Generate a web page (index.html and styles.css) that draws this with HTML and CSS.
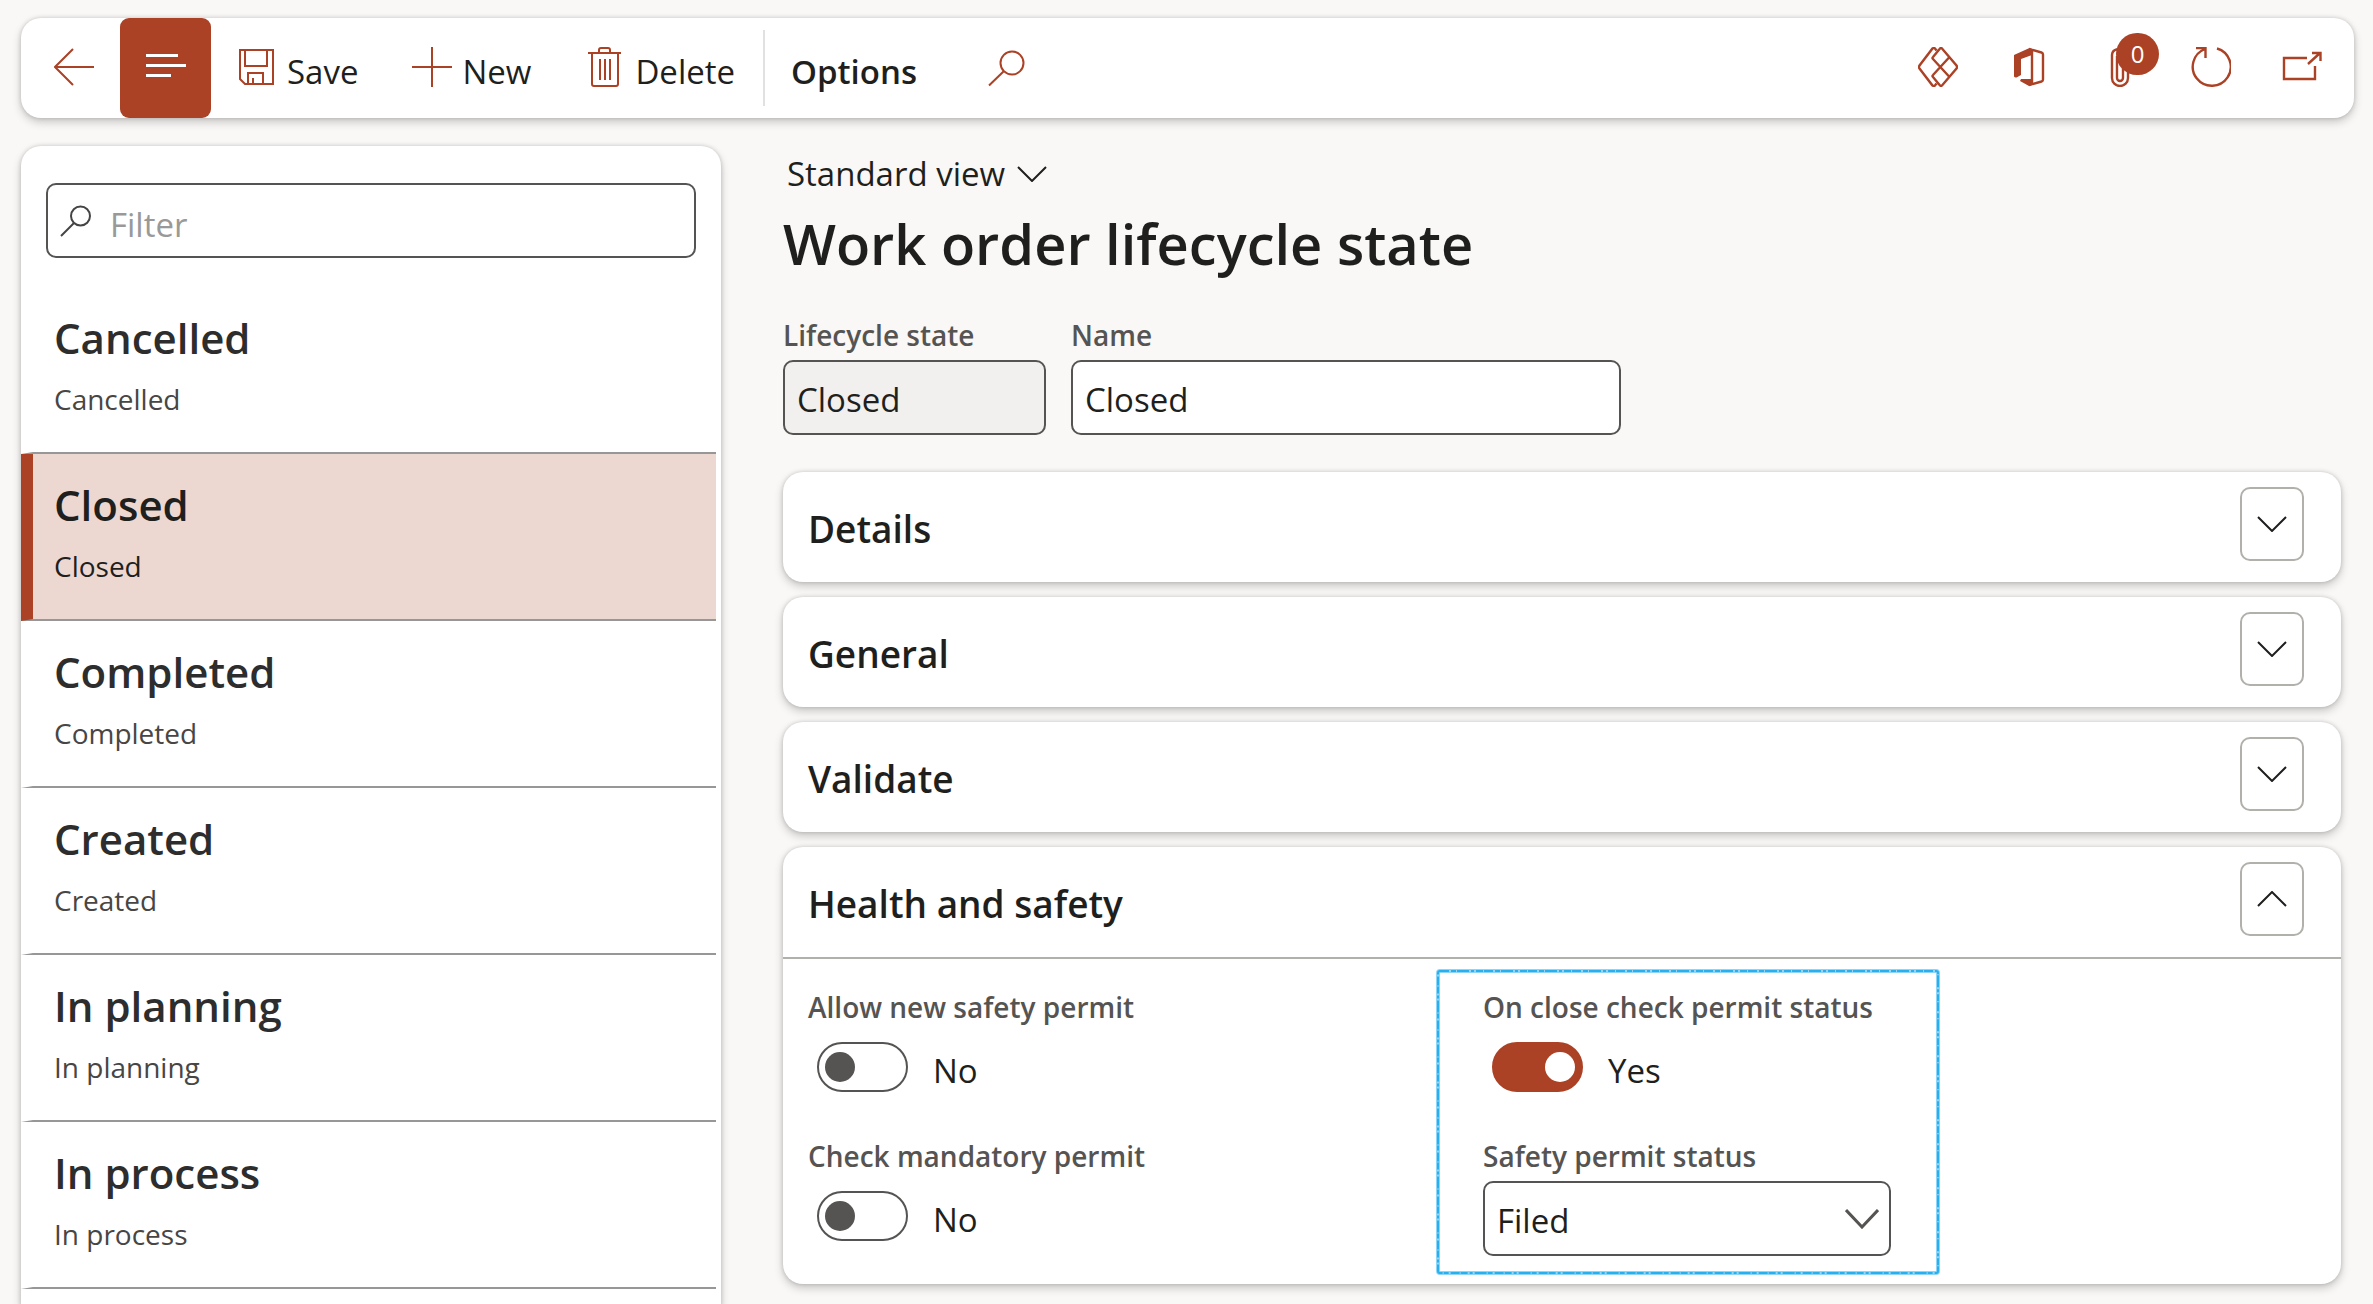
FILE: index.html
```
<!DOCTYPE html>
<html lang="en">
<head>
<meta charset="utf-8">
<meta name="viewport" content="width=device-width, initial-scale=1">
<title>Work order lifecycle state</title>
<link rel="stylesheet" href="styles.css">
</head>
<body>
<div class="app">
  <header class="toolbar">
    <button class="tool tool-back" type="button" aria-label="Back">
      <svg class="icon" viewBox="0 0 40 40"><path d="M40 20H1M19 2 1 20l18 18"/></svg>
    </button>
    <button class="tool tool-menu" type="button" aria-label="Show list">
      <svg class="icon icon-menu" viewBox="0 0 40 40"><path d="M0 8.5h32M0 18.5h40M0 28.5h25"/></svg>
    </button>
    <button class="tool tool-action" type="button">
      <svg class="icon" viewBox="0 0 40 40"><path d="M3 3h33v34H8l-5-5zM8 3v16h22V3M11 37V26h15v11M16 31v6"/></svg>
      <span class="tool-text">Save</span>
    </button>
    <button class="tool tool-action" type="button">
      <svg class="icon" viewBox="0 0 40 40"><path d="M0 20h40M20 0v40"/></svg>
      <span class="tool-text">New</span>
    </button>
    <button class="tool tool-action" type="button">
      <svg class="icon" viewBox="0 0 40 40"><path d="M3 6h33M7 6v31q0 2 2 2h22q2 0 2-2V6M14 6V3q0-2 2-2h7q2 0 2 2v3M15 12v21M20 12v21M25 12v21"/></svg>
      <span class="tool-text">Delete</span>
    </button>
    <span class="divider"></span>
    <button class="tool tool-strong" type="button"><span class="tool-text">Options</span></button>
    <button class="tool tool-search" type="button" aria-label="Search">
      <svg class="icon" viewBox="0 0 40 40"><circle cx="25" cy="16" r="11.5"/><path d="M17 24 2 38.500"/></svg>
    </button>
    <div class="tool-end">
      <button class="tool tool-icon" type="button" aria-label="Power Apps">
        <svg class="icon" viewBox="0 0 40 40"><path d="M18.500 3.500 17 1.500q-1-1-2.500 0L1.500 18.500q-1 1.500 0 3l13 17q1.500 1 2.500 0l1.500-2M15 10l7-8.500q1-1 2 0l14.500 17q1 1.500 0 3L24 38.500q-1 1-2 0L15 30q-1-1 0-2l16.500-18M15 10q-1 1 0 2l16.500 18"/></svg>
      </button>
      <button class="tool tool-icon" type="button" aria-label="Open in Microsoft Office">
        <svg class="icon" viewBox="0 0 40 40"><path class="solid" d="M20.500 1 5 8v21.500q1 1.500 3 .8l4-2.300V12l11-4V2zM12 32h11v6l-3 1-9-5z"/><path d="m20 2 12.500 3.500q1.500.5 1.500 2v25q0 1.500-1.500 2L20 38M23 3v34"/></svg>
      </button>
      <button class="tool tool-icon" type="button" aria-label="Attachments">
        <svg class="icon" viewBox="0 0 40 40"><path d="M28 8v23a8 8 0 0 1-16 0V8a6 6 0 0 1 11-3v26a3 3 0 0 1-6 0V9"/></svg>
        <span class="badge">0</span>
      </button>
      <button class="tool tool-icon" type="button" aria-label="Refresh">
        <svg class="icon" viewBox="0 0 40 40"><path d="M26 1.500A19 19 0 1 1 14 2M5 1h9.500v10"/></svg>
      </button>
      <button class="tool tool-icon" type="button" aria-label="Open in new window">
        <svg class="icon" viewBox="0 0 40 40"><path d="M25 11H2v21h31V19M26 17 38 6M30 6h8.500v8"/></svg>
      </button>
    </div>
  </header>

  <div class="workspace">
    <aside class="sidebar">
      <div class="filter">
        <svg class="filter-icon" viewBox="0 0 32 32"><circle cx="20.500" cy="11" r="9.500"/><path d="M14 18 1 31"/></svg>
        <input class="filter-input" type="text" placeholder="Filter" aria-label="Filter">
      </div>
      <ul class="states">
        <li><button class="state" type="button"><span class="state-title">Cancelled</span><span class="state-sub">Cancelled</span></button></li>
        <li><button class="state state-selected" type="button"><span class="state-title">Closed</span><span class="state-sub">Closed</span></button></li>
        <li><button class="state" type="button"><span class="state-title">Completed</span><span class="state-sub">Completed</span></button></li>
        <li><button class="state" type="button"><span class="state-title">Created</span><span class="state-sub">Created</span></button></li>
        <li><button class="state" type="button"><span class="state-title">In planning</span><span class="state-sub">In planning</span></button></li>
        <li><button class="state" type="button"><span class="state-title">In process</span><span class="state-sub">In process</span></button></li>
      </ul>
    </aside>

    <main class="content">
      <button class="view" type="button">Standard view
        <svg class="chevron" viewBox="0 0 30 16"><path d="m1 1 14 14L29 1"/></svg>
      </button>
      <h1 class="title">Work order lifecycle state</h1>

      <div class="header-fields">
        <div class="field field-state">
          <label class="label" for="state">Lifecycle state</label>
          <input class="input input-readonly" id="state" type="text" value="Closed" readonly>
        </div>
        <div class="field field-name">
          <label class="label" for="name">Name</label>
          <input class="input" id="name" type="text" value="Closed">
        </div>
      </div>

      <div class="cards">
        <section class="card">
          <div class="card-head"><h2 class="card-title">Details</h2>
            <button class="expand" type="button" aria-label="Expand Details"><svg class="chevron" viewBox="0 0 30 16"><path d="m1 1 14 14L29 1"/></svg></button></div>
        </section>
        <section class="card">
          <div class="card-head"><h2 class="card-title">General</h2>
            <button class="expand" type="button" aria-label="Expand General"><svg class="chevron" viewBox="0 0 30 16"><path d="m1 1 14 14L29 1"/></svg></button></div>
        </section>
        <section class="card">
          <div class="card-head"><h2 class="card-title">Validate</h2>
            <button class="expand" type="button" aria-label="Expand Validate"><svg class="chevron" viewBox="0 0 30 16"><path d="m1 1 14 14L29 1"/></svg></button></div>
        </section>
        <section class="card">
          <div class="card-head"><h2 class="card-title">Health and safety</h2>
            <button class="expand" type="button" aria-label="Collapse Health and safety"><svg class="chevron" viewBox="0 0 30 16"><path d="m1 15 14-14 14 14"/></svg></button></div>
          <div class="card-body">
            <div class="group">
              <div class="option">
                <label class="label" for="allow">Allow new safety permit</label>
                <div class="toggle-row"><input class="toggle" id="allow" type="checkbox"><span class="toggle-text">No</span></div>
              </div>
              <div class="option">
                <label class="label" for="mandatory">Check mandatory permit</label>
                <div class="toggle-row"><input class="toggle" id="mandatory" type="checkbox"><span class="toggle-text">No</span></div>
              </div>
            </div>
            <div class="group group-marked">
              <svg class="marker" aria-hidden="true"><rect class="marker-wash" x="2" y="2" rx="2"/><rect class="marker-ink" x="2" y="2" rx="2"/></svg>
              <div class="option">
                <label class="label" for="onclose">On close check permit status</label>
                <div class="toggle-row"><input class="toggle" id="onclose" type="checkbox" checked><span class="toggle-text">Yes</span></div>
              </div>
              <div class="field">
                <label class="label" for="status">Safety permit status</label>
                <div class="select-wrap">
                  <select class="select" id="status"><option>Filed</option></select>
                  <svg class="select-arrow" viewBox="0 0 34 20"><path d="m1 1 16 17L33 1"/></svg>
                </div>
              </div>
            </div>
          </div>
        </section>
      </div>
    </main>
  </div>
</div>
</body>
</html>
```
FILE: styles.css
```
:root {
  --accent: #ab4125;
  --ink: #1f1f1d;
  --muted: #555452;
  --shadow: 0 4px 10px rgba(0, 0, 0, .2), 0 0 4px rgba(0, 0, 0, .16);
}

* { box-sizing: border-box; }

body {
  margin: 0;
  background: #f9f8f6;
  color: var(--ink);
  font-family: "Open Sans", "Noto Sans", sans-serif;
  font-size: 33px;
}

button, input, select {
  margin: 0;
  color: inherit;
  font: inherit;
}

button {
  padding: 0;
  border: 0;
  background: none;
  text-align: left;
}

svg {
  flex: none;
  fill: none;
  stroke: currentColor;
  stroke-width: 2;
}

.app {
  display: flex;
  flex-direction: column;
  gap: 28px;
  min-height: 100vh;
  padding: 18px 19px 0 21px;
}

/* Toolbar */
.toolbar {
  display: flex;
  align-items: stretch;
  height: 100px;
  padding-right: 7px;
  border-radius: 20px;
  background: #fff;
  box-shadow: var(--shadow);
}

.tool {
  position: relative;
  display: flex;
  align-items: center;
  gap: 10px;
  padding: 0 26px 2px;
}

.tool-action { margin-right: 2px; }

.tool-text { padding-top: 8px; }

.tool-strong { font-weight: 600; }

.icon {
  width: 40px;
  height: 40px;
  color: var(--accent);
}

.icon .solid {
  fill: currentColor;
  stroke: none;
}

.tool-back { padding: 0 26px 2px 33px; }

.tool-menu {
  padding-right: 25px;
  border-radius: 9px;
  background: var(--accent);
}

.icon-menu {
  color: #fff;
  stroke-width: 3;
}

.tool-search { margin-left: 18px; }

.divider {
  align-self: center;
  width: 2px;
  height: 76px;
  background: #e1e1e1;
}

.tool-end {
  display: flex;
  margin-left: auto;
}

.tool-icon {
  justify-content: center;
  width: 91px;
  padding: 0 0 2px;
}

.tool-icon .icon { stroke-width: 2.4; }

.badge {
  position: absolute;
  top: 15px;
  left: 42px;
  width: 43px;
  height: 42px;
  border-radius: 21px;
  background: var(--accent);
  color: #fff;
  font-size: 24px;
  line-height: 42px;
  text-align: center;
}

/* Layout under the toolbar */
.workspace {
  display: flex;
  flex: 1;
  gap: 62px;
}

.sidebar {
  flex: none;
  width: 700px;
  padding-top: 37px;
  border-radius: 20px 20px 0 0;
  background: #fff;
  box-shadow: var(--shadow);
}

.filter {
  display: flex;
  align-items: center;
  gap: 16px;
  height: 75px;
  margin: 0 25px 29px;
  padding: 0 12px;
  border: 2px solid var(--muted);
  border-radius: 10px;
}

.filter-icon {
  width: 32px;
  height: 32px;
  color: #444;
}

.filter-input {
  flex: 1;
  min-width: 0;
  padding: 8px 2px 0;
  border: 0;
  outline: 0;
  background: none;
}

.filter-input::placeholder {
  color: #999;
  opacity: 1;
}

.states {
  margin: 0 5px 0 0;
  padding: 0;
  list-style: none;
}

.state {
  display: flex;
  flex-direction: column;
  gap: 13px;
  width: 100%;
  padding: 23px 20px 33px 21px;
  border-bottom: 2px solid #979797;
  border-left: 12px solid transparent;
  color: #2d2d2d;
}

.state-title {
  font-size: 42px;
  font-weight: 600;
  line-height: 56px;
}

.state-sub {
  color: #484644;
  font-size: 28px;
  line-height: 40px;
}

.state-selected {
  border-left-color: var(--accent);
  background: #edd8d1;
}

.state-selected, .state-selected .state-sub { color: var(--ink); }

/* Record */
.content {
  flex: 1;
  min-width: 0;
  padding: 5px 13px 22px 0;
}

.view {
  display: flex;
  align-items: center;
  gap: 12px;
  padding-left: 4px;
  line-height: 46px;
}

.chevron {
  width: 30px;
  height: 16px;
}

.title {
  margin: 8px 0 35px;
  font-size: 56px;
  font-weight: 600;
  line-height: 76px;
}

.header-fields {
  display: flex;
  gap: 25px;
  margin-bottom: 37px;
}

.field {
  display: flex;
  flex-direction: column;
  gap: 6px;
}

.field-state { width: 263px; }

.field-name { width: 550px; }

.label {
  color: var(--muted);
  font-size: 28px;
  font-weight: 600;
  line-height: 38px;
}

.input, .select {
  width: 100%;
  height: 75px;
  padding: 4px 12px 0;
  border: 2px solid var(--muted);
  border-radius: 10px;
  outline: 0;
  background: #fff;
}

.input-readonly { background: #f1f0ee; }

.cards {
  display: flex;
  flex-direction: column;
  gap: 15px;
}

.card {
  border-radius: 20px;
  background: #fff;
  box-shadow: var(--shadow);
}

.card-head {
  display: flex;
  justify-content: space-between;
  padding: 15px 37px 21px 25px;
}

.card-title {
  margin: 0;
  padding-top: 10px;
  font-size: 37px;
  font-weight: 600;
  line-height: 64px;
}

.expand {
  display: flex;
  align-items: center;
  justify-content: center;
  width: 64px;
  height: 74px;
  border: 2px solid #b2b0ab;
  border-radius: 10px;
}

.card-body {
  display: grid;
  grid-template-columns: minmax(0, 628px) 504px;
  padding: 10px 25px 9px;
  border-top: 2px solid #b2b0ab;
}

.group {
  display: flex;
  flex-direction: column;
  gap: 45px;
  padding-top: 19px;
}

.group-marked {
  position: relative;
  padding: 19px 49px 19px 47px;
}

.marker {
  position: absolute;
  top: 0;
  left: 0;
  width: 100%;
  height: 100%;
  pointer-events: none;
}

.marker rect {
  width: calc(100% - 4px);
  height: calc(100% - 4px);
}

.marker-wash {
  stroke: #8fd5f7;
  stroke-width: 4;
}

.marker-ink {
  stroke: #27b0ef;
  stroke-width: 2;
  stroke-dasharray: 9 2 5 1 12 2 3 2 7 1;
}

.option {
  display: flex;
  flex-direction: column;
  gap: 16px;
}

.toggle-row {
  display: flex;
  align-items: center;
  gap: 25px;
  height: 50px;
  padding-left: 9px;
}

.toggle {
  display: flex;
  align-items: center;
  width: 91px;
  height: 50px;
  padding: 0 6px;
  border: 2px solid var(--muted);
  border-radius: 25px;
  appearance: none;
}

.toggle::before {
  width: 30px;
  height: 30px;
  border-radius: 50%;
  background: var(--muted);
  content: "";
}

.toggle:checked {
  justify-content: flex-end;
  border-color: var(--accent);
  background: var(--accent);
}

.toggle:checked::before { background: #fff; }

.toggle-text { padding-top: 6px; }

.select-wrap { position: relative; }

.select {
  display: block;
  appearance: none;
}

.select-arrow {
  position: absolute;
  top: 28px;
  right: 12px;
  width: 34px;
  height: 20px;
  color: var(--muted);
  stroke-width: 3;
  pointer-events: none;
}
```
